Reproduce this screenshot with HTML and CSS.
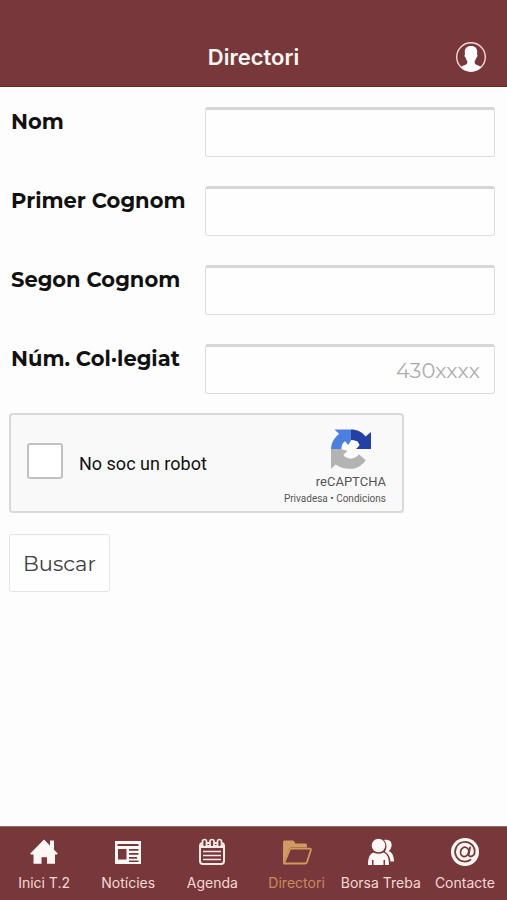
FILE: index.html
```html
<!DOCTYPE html>
<html lang="ca">
<head>
<meta charset="utf-8">
<meta name="viewport" content="width=device-width, initial-scale=1">
<title>Directori</title>
<link rel="stylesheet" href="styles.css">
</head>
<body>
<header class="topbar">
  <h1 class="topbar-title">Directori</h1>
  <button class="profile" type="button" aria-label="Perfil">
    <svg viewBox="0 0 32 32" width="32" height="32" aria-hidden="true">
      <circle cx="16" cy="16" r="14.3" fill="none" stroke="#f6d9d4" stroke-width="1.4"/>
      <path fill="#fff" d="M16 5c4.300 0 6.400 2.500 6.200 6.300l-.2 2.200c.9.200.5 2.700-.7 3.200-.4 1.500-.9 2.500-1.600 3.300v2.200c.8 1.800 4.300 2.100 6.500 3.700C23.600 28.900 20 30.500 16 30.500S8.400 28.900 5.800 25.900c2.200-1.600 5.700-1.900 6.500-3.700V20c-.7-.8-1.200-1.800-1.600-3.300-1.200-.5-1.600-3-.7-3.200l-.2-2.200C9.600 7.500 11.700 5 16 5z"/>
    </svg>
  </button>
</header>

<main class="content">
  <form class="search">
    <div class="fields">
      <label for="nom">Nom</label>
      <input id="nom" type="text">
      <label for="cognom1">Primer Cognom</label>
      <input id="cognom1" type="text">
      <label for="cognom2">Segon Cognom</label>
      <input id="cognom2" type="text">
      <label for="numero">Núm. Col·legiat</label>
      <input id="numero" class="numeric" type="text" placeholder="430xxxx">
    </div>

    <div class="captcha">
      <input id="robot" class="captcha-check" type="checkbox">
      <label class="captcha-label" for="robot">No soc un robot</label>
      <div class="captcha-brand">
        <svg class="captcha-logo" viewBox="0 0 40 40" width="40" height="40" aria-hidden="true">
          <path fill="#b3b3b3" d="M0 20v20l4.600-4.600C8.300 38.300 14 40 20 39.800c6-.2 11-3.200 14.700-8.600L28 25.200c-1.500 2.700-5 4.200-8 4.200-3.800 0-6.600-1.500-7.700-3.700L17 21.500 10 20z"/>
          <path fill="#4a80e0" d="M20 .5H3.500l4.700 4.600C3.300 8.500.3 14 0 20h10.500c-.2-3.500 1-6.400 3.700-7.700L17 16l3-4z"/>
          <path fill="#2440a4" d="M20 .5c5.900 0 11.200 2.500 14.600 7L40 3v17H23.500l5-4.300c-1.100-2.800-4-4.700-8.500-4.700z"/>
          <path fill="#fdfdfd" d="M13.500 12.500 18 17l2-5.500 7 1-2.500 5 4.500-1.500-4.500 4.500L27 25l-7 4.500-7-3.500 3.500-4-6-2z"/>
        </svg>
        <span class="captcha-name">reCAPTCHA</span>
        <span class="captcha-links"><a href="#privadesa">Privadesa</a> • <a href="#condicions">Condicions</a></span>
      </div>
    </div>

    <button class="submit" type="submit">Buscar</button>
  </form>
</main>

<nav class="tabs">
  <a class="tab" href="#inici">
    <svg viewBox="0 0 30 30" width="30" height="30" aria-hidden="true" fill="#fff8f5">
      <path d="M15 2.500 28.500 16.300c.5.600.1 1.200-.7 1.200H26v9.200H18v-6.500h-5.500v6.500H4.500v-9.200H2.200c-.8 0-1.200-.6-.7-1.200zM21 3.500h4v9l-4-4z"/>
    </svg>
    <span>Inici T.2</span>
  </a>
  <a class="tab" href="#noticies">
    <svg viewBox="0 0 30 30" width="30" height="30" aria-hidden="true">
      <path fill="#fff8f5" d="M2 4h26v23H2z"/>
      <path fill="#78373a" d="M4.500 7h21v2h-21zM5 12h8.500v10.500H5zM16 12h9.500v1.800H16zM16 16h9.500v1.800H16zM16 20h8v1.800h-8zM16 23.500h9.500V25H16z"/>
    </svg>
    <span>Notícies</span>
  </a>
  <a class="tab" href="#agenda">
    <svg viewBox="0 0 30 30" width="30" height="30" aria-hidden="true" fill="none" stroke="#ffeae5">
      <rect x="3" y="6" width="24" height="21" rx="3" stroke-width="2"/>
      <path stroke-width="3" d="M3 9.500h24"/>
      <path stroke-width="1.500" d="M6 14.500h18M6 18.500h18M6 22.500h18"/>
      <g fill="#78373a" stroke-width="1.700">
        <rect x="5.500" y="2.500" width="4" height="7.500" rx="2"/>
        <rect x="13" y="2.500" width="4" height="7.500" rx="2"/>
        <rect x="20.500" y="2.500" width="4" height="7.500" rx="2"/>
      </g>
    </svg>
    <span>Agenda</span>
  </a>
  <a class="tab tab-active" href="#directori" aria-current="page">
    <svg viewBox="0 0 30 30" width="30" height="30" aria-hidden="true">
      <path fill="#d09b5f" d="M1 27V5.500C1 4 1.700 3.500 3 3.500h7c1.500 0 2 .5 2.500 1.500l.8 1.500H23c1.500 0 2 .6 2 2v2H10c-1.700 0-2.500.5-3 1.800z"/>
      <path fill="none" stroke="#d09b5f" stroke-width="1.800" stroke-linejoin="round" d="M2 26.500 7.500 13.200c.4-1 1-1.500 2-1.500h18.300c.9 0 1.300.5 1 1.500L25 25c-.3 1-.9 1.500-2 1.500z"/>
    </svg>
    <span>Directori</span>
  </a>
  <a class="tab" href="#borsa">
    <svg viewBox="0 0 30 30" width="30" height="30" aria-hidden="true" fill="#fff8f5">
      <path d="M18 3c5-1.200 8.500 1.800 7.500 6.300-.4 2-1.300 3.700-2.700 4.700 3.400 1.700 5.200 5 5.200 10.500h-3.500c-.3-4.500-2-7.800-5.500-9.800 1.700-2.700 2.500-8-1-11.700z"/>
      <circle cx="12.500" cy="8.500" r="6.800"/>
      <path d="M7.500 15.500c3 1.600 7 1.600 10 0 3.800 1.500 5.500 5 5.500 12.500h-4v-5h-1.500v5h-10v-5H6v5H2c0-7.500 1.700-11 5.500-12.500z"/>
    </svg>
    <span>Borsa Treba</span>
  </a>
  <a class="tab" href="#contacte">
    <svg viewBox="0 0 30 30" width="30" height="30" aria-hidden="true">
      <circle cx="15" cy="15" r="14" fill="#fff8f5"/>
      <g fill="none" stroke="#78373a" stroke-width="1.800" stroke-linecap="round">
        <path d="M20.500 22.800A9.800 9.800 0 1 1 24.700 14c.2 3.500-1.700 5.500-3.900 5.500-1.700 0-2.400-1-2-2.700l1.300-6.500"/>
        <ellipse cx="14.600" cy="14.900" rx="4" ry="4.700" transform="rotate(20 14.600 14.900)"/>
      </g>
    </svg>
    <span>Contacte</span>
  </a>
</nav>
</body>
</html>
```
FILE: styles.css
```css
* {
  box-sizing: border-box;
}

body {
  margin: 0;
  min-height: 100vh;
  display: flex;
  flex-direction: column;
  background: #fdfdfd;
  color: #111;
  font-family: Montserrat, Inter, sans-serif;
}

.topbar {
  display: grid;
  grid-template-columns: 1fr auto 1fr;
  align-items: center;
  padding: 41px 20px 13px;
  border-bottom: 1px solid #65292c;
  background: #78373a;
  color: #fff8f5;
}

.topbar-title {
  grid-column: 2;
  margin: 0;
  font: 600 22px/32px Inter, sans-serif;
}

.profile {
  justify-self: end;
  width: 32px;
  height: 32px;
  padding: 0;
  border: 0;
  background: none;
}

.profile svg {
  display: block;
}

.content {
  flex: 1;
  padding: 20px 12px 20px 9px;
}

.fields {
  display: grid;
  grid-template-columns: 2fr 3fr;
  gap: 29px 3px;
  margin-bottom: 19px;
}

.fields label {
  padding-left: 2px;
  font-size: 21px;
  font-weight: 700;
  line-height: 30px;
  font-feature-settings: "locl" 0;
}

.fields input {
  width: 100%;
  height: 50px;
  padding: 0 14px;
  border: 1px solid #dedede;
  border-top: 3px solid #d6d6d6;
  border-radius: 3px;
  background: #fefefe;
  font: 400 21px Montserrat, Inter, sans-serif;
}

.fields .numeric {
  text-align: right;
}

.fields input::placeholder {
  color: #adadad;
}

.captcha {
  display: flex;
  align-items: center;
  width: 395px;
  max-width: 100%;
  height: 100px;
  padding: 0 16px;
  border: 2px solid #d9d9d9;
  border-radius: 4px;
  background: #f9f9f9;
  font-family: Roboto, sans-serif;
}

.captcha-check {
  appearance: none;
  width: 36px;
  height: 36px;
  margin: 0 16px 4px 0;
  border: 2px solid #c1c1c1;
  border-radius: 3px;
  background: #fff;
}

.captcha-label {
  flex: 1;
  font-size: 18px;
  color: #111;
}

.captcha-brand {
  display: grid;
  justify-items: end;
  padding-top: 8px;
  color: #555;
}

.captcha-logo {
  margin-right: 15px;
}

.captcha-name {
  margin-top: 4px;
  font-size: 13px;
  line-height: 18px;
}

.captcha-links {
  font-size: 10px;
  line-height: 15px;
}

.captcha-links a {
  color: inherit;
  text-decoration: none;
}

.submit {
  display: block;
  height: 58px;
  margin-top: 21px;
  padding: 0 13px;
  border: 1px solid #e4e4e4;
  border-radius: 3px;
  background: #fefefe;
  color: #404040;
  font: 400 21px Montserrat, Inter, sans-serif;
}

.tabs {
  display: grid;
  grid-template-columns: repeat(6, minmax(0, 1fr));
  padding: 10px 0 7px 2px;
  border-top: 1px solid #8f6d6e;
  background: #78373a;
}

.tab {
  display: flex;
  flex-direction: column;
  align-items: center;
  gap: 6px;
  color: #f5d9d5;
  font: 400 14px/20px Inter, sans-serif;
  text-decoration: none;
  white-space: nowrap;
}

.tab-active {
  color: #c58c5c;
}
```
